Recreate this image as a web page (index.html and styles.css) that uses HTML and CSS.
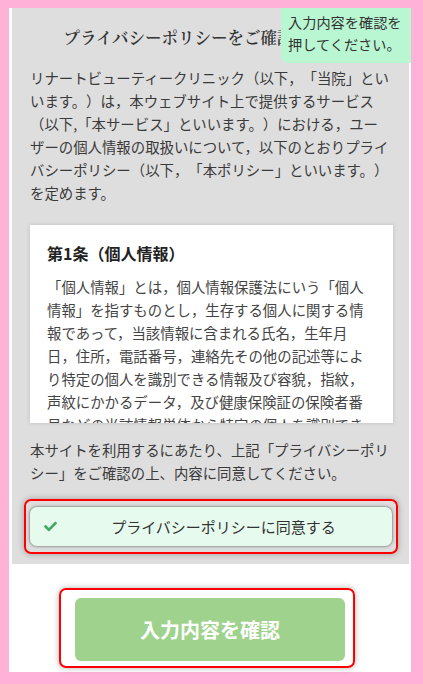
FILE: index.html
```html
<!DOCTYPE html>
<html lang="ja">
<head>
<meta charset="utf-8">
<title>プライバシーポリシー</title>
<link rel="stylesheet" href="styles.css">
</head>
<body>
<div class="page">
  <section class="policy">
    <h1 class="policy-title">プライバシーポリシーをご確認ください</h1>
    <p class="intro">リナートビューティークリニック（以下，「当院」といいます。）は，本ウェブサイト上で提供するサービス（以下,「本サービス」といいます。）における，ユーザーの個人情報の取扱いについて，以下のとおりプライバシーポリシー（以下，「本ポリシー」といいます。）を定めます。</p>
    <div class="card">
      <h2 class="card-title">第1条（個人情報）</h2>
      <p class="card-text">「個人情報」とは，個人情報保護法にいう「個人情報」を指すものとし，生存する個人に関する情報であって，当該情報に含まれる氏名，生年月日，住所，電話番号，連絡先その他の記述等により特定の個人を識別できる情報及び容貌，指紋，声紋にかかるデータ，及び健康保険証の保険者番号などの当該情報単体から特定の個人を識別できる情報（個人識別情報）を指します。</p>
    </div>
    <p class="notice">本サイトを利用するにあたり、上記「プライバシーポリシー」をご確認の上、内容に同意してください。</p>
    <div class="outline agree-outline">
      <button class="agree" type="button">
        <svg class="check" viewBox="0 0 512 512" width="13" height="13" aria-hidden="true"><path d="M173.9 439.4l-166.4-166.4c-10-10-10-26.2 0-36.2l36.2-36.2c10-10 26.2-10 36.2 0L192 312.7 432.1 72.6c10-10 26.2-10 36.2 0l36.2 36.2c10 10 10 26.2 0 36.2l-294.4 294.4c-10 10-26.2 10-36.2 0z"/></svg>
        <span class="agree-label">プライバシーポリシーに同意する</span>
      </button>
    </div>
  </section>
  <div class="submit-row">
    <div class="outline submit-outline">
      <button class="submit" type="button">入力内容を確認</button>
    </div>
  </div>
  <div class="tooltip">入力内容を確認を<br>押してください。</div>
</div>
</body>
</html>
```

FILE: styles.css
```css
* { box-sizing: border-box; }
html, body { height: 100%; }
body {
  margin: 0;
  padding: 8px 12px 11px 9px;
  background: #ffb1d8;
  font-family: "Noto Sans CJK JP", "Noto Sans", sans-serif;
  color: #333;
  text-spacing-trim: space-all;
}
.page {
  position: relative;
  background: #fff;
  padding: 0 2px 4px 3px;
}
.policy {
  background: #dedede;
  padding: 18px 16px 10px 18px;
}
.policy-title {
  margin: 0;
  text-align: center;
  font-family: "Noto Serif CJK JP", "Liberation Serif", "Noto Sans CJK JP", serif;
  font-size: 16.5px;
  line-height: 22px;
  font-weight: 600;
  color: #333;
}
.intro {
  margin: 18px 2px 0 0;
  font-size: 14.4px;
  line-height: 23px;
  color: #3a3a3a;
}
.card {
  margin-top: 21px;
  height: 198px;
  overflow: hidden;
  background: #fff;
  padding: 16px 17px 0;
  box-shadow: 0 0 4px rgba(0,0,0,0.15);
}
.card-title {
  margin: 0;
  font-size: 16px;
  line-height: 24px;
  font-weight: 700;
  color: #222;
}
.card-text {
  margin: 10px 0 0;
  font-size: 14.4px;
  line-height: 23px;
  color: #444;
}
.notice {
  margin: 15px 0 0;
  font-size: 14.4px;
  line-height: 23px;
  color: #3a3a3a;
}
.outline {
  border: 2px solid #ff0000;
  border-radius: 7px;
  box-shadow: 0 0 6px rgba(0,0,0,0.3);
}
.agree-outline {
  margin: 15px -5px 0 -6px;
  padding: 5px 3px;
}
.agree {
  display: flex;
  align-items: center;
  width: 100%;
  height: 41px;
  padding: 0 2px 0 14px;
  background: #e6fbee;
  border: 1px solid #aaa;
  border-radius: 8px;
  box-shadow: 0 0 3px rgba(0,0,0,0.25);
  font-family: inherit;
  text-spacing-trim: space-all;
  cursor: pointer;
}
.check {
  flex: none;
  fill: #43a864;
}
.agree-label {
  flex: 1;
  text-align: center;
  font-size: 15px;
  color: #333;
}
.submit-row {
  display: flex;
  justify-content: center;
  padding: 24px 7px 0 0;
}
.submit-outline {
  width: 296px;
  padding: 8px 8px 5px 14px;
}
.submit {
  display: block;
  width: 100%;
  height: 63px;
  border: none;
  border-radius: 6px;
  background: #9fd38d;
  color: #fff;
  font-family: inherit;
  font-size: 20px;
  font-weight: 700;
  cursor: pointer;
}
.tooltip {
  position: absolute;
  top: 0;
  right: 0;
  width: 130px;
  height: 55px;
  padding: 3px 0 0 7px;
  background: #b9f6d2;
  border-radius: 0 0 0 7px;
  font-size: 14.2px;
  line-height: 22px;
  color: #333;
}
```
